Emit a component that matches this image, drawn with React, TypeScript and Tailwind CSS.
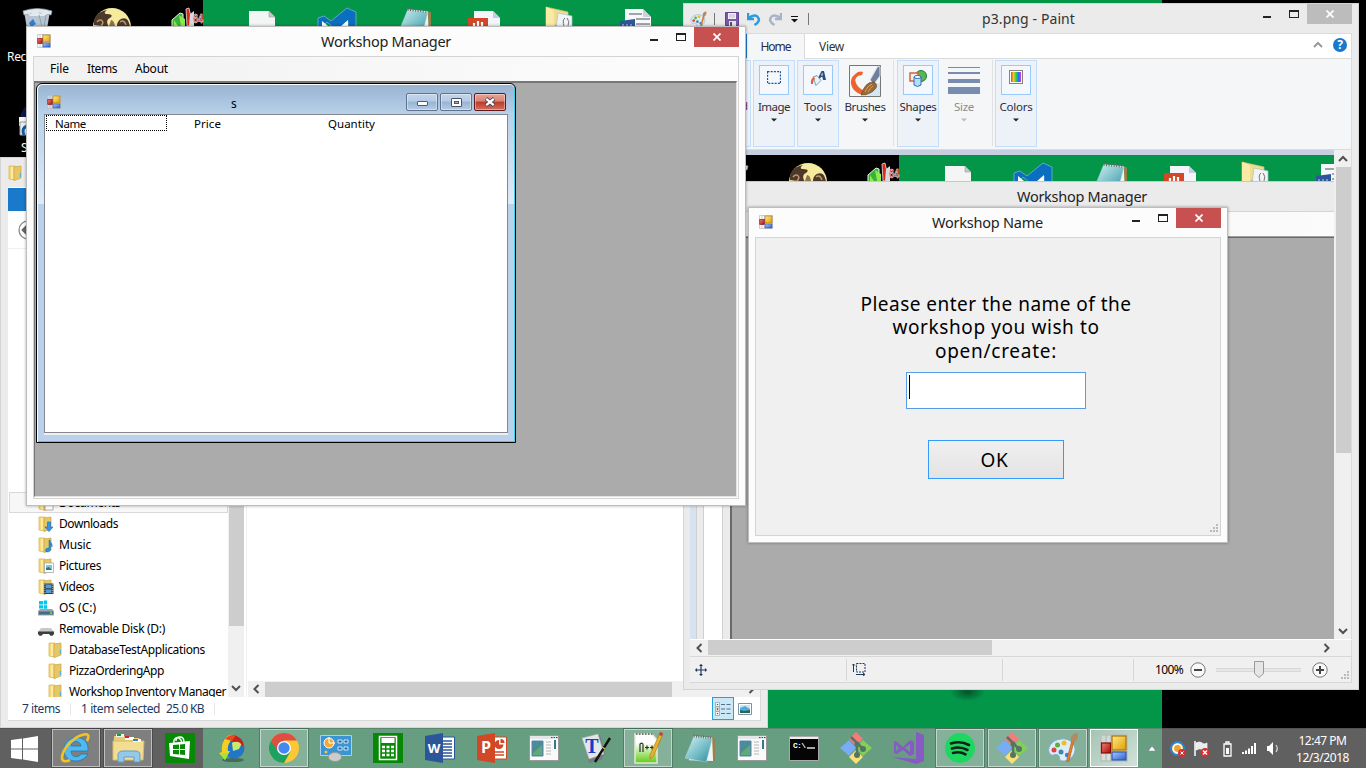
import React, { useLayoutEffect, useRef } from "react";

/** A single line of text, tracked so that it takes exactly `w` pixels. */
function Fit({ w, className = "", children }: { w: number; className?: string; children: string }) {
  const ref = useRef<HTMLSpanElement>(null);
  useLayoutEffect(() => {
    const el = ref.current;
    if (!el) return;
    el.style.letterSpacing = "0px";
    const natural = el.getBoundingClientRect().width;
    el.style.letterSpacing = `${(w - natural) / children.length}px`;
  }, [w, children]);
  return (
    <span ref={ref} className={`inline-block whitespace-nowrap ${className}`}>
      {children}
    </span>
  );
}

function FormsIcon({ size = 14 }: { size?: number }) {
  return (
    <svg width={size} height={size} viewBox="0 0 28 28" className="shrink-0">
      <defs>
        <linearGradient id="fy" x1="0" y1="0" x2="1" y2="1"><stop offset="0" stopColor="#ffe98a" /><stop offset="1" stopColor="#e0a000" /></linearGradient>
        <linearGradient id="fr" x1="0" y1="0" x2="1" y2="1"><stop offset="0" stopColor="#f08070" /><stop offset="1" stopColor="#b00808" /></linearGradient>
        <linearGradient id="fb" x1="0" y1="0" x2="1" y2="1"><stop offset="0" stopColor="#a8c8ff" /><stop offset="1" stopColor="#2860d0" /></linearGradient>
      </defs>
      <path d="M1 1h26v26H1zM1 9h10M1 18h26M6 1v8M6 19v8M11 1v26" fill="#ffffff55" stroke="#bdbdbd" strokeWidth="1.5" />
      <rect x="12" y="2" width="14" height="14" fill="url(#fy)" stroke="#a87400" strokeWidth="1.2" />
      <rect x="1.5" y="9" width="9" height="10" fill="url(#fr)" stroke="#8a0a0a" strokeWidth="1.2" />
      <rect x="12" y="18" width="14" height="8" fill="url(#fb)" stroke="#3358a8" strokeWidth="1.2" />
    </svg>
  );
}

function Folder({ kind = "" }: { kind?: string }) {
  return (
    <svg width="16" height="16" viewBox="0 0 16 16" className="shrink-0">
      <path d="M1 1h6v14l-6-1z" fill="#f5d878" stroke="#d9b95a" strokeWidth=".8" />
      <path d="M6 2l7-1v12l-7 2.6z" fill="#e6c766" stroke="#cfa94d" strokeWidth=".8" />
      <path d="M4 2v12" stroke="#fff3bd" strokeWidth="1.3" />
      {kind === "" && <path d="M12.4 8v4" stroke="#4fb3e0" strokeWidth="1.2" />}
      {kind === "down" && <path d="M9.5 6h3v5H15l-4 4.6L7 11h2.500z" fill="#2f96e8" stroke="#1668b0" strokeWidth=".6" />}
      {kind === "music" && <path d="M12 3c0 3 3 3 2 7-.3-2-1-2-1.500-2v5c0 2-5 3-5 .5S10 11 11 11V3z" fill="#2990dc" stroke="#1a6dae" strokeWidth=".5" />}
      {kind === "pic" && <><path d="M6.500 5h9v9.500h-9z" fill="#fff" stroke="#a8a8a8" strokeWidth=".8" /><path d="M8 7h6v5H8z" fill="#7cc2e6" /><path d="M8 12v-2l3-1 3 3z" fill="#2e7d6b" /></>}
      {kind === "video" && <><path d="M6 4.500h9.500V15H6z" fill="#39434c" /><path d="M8 5.500h5.500v3.700H8zM8 10.500h5.500V14H8z" fill="#4c9ed8" /><path d="M6.900 5v10M14.700 5v10" stroke="#ccc" strokeWidth=".8" strokeDasharray="1 1" /></>}
      {kind === "doc" && <path d="M7 5h8v10H7z" fill="#fff" stroke="#999" strokeWidth=".8" />}
    </svg>
  );
}

function DriveIcon({ os }: { os?: boolean }) {
  return (
    <svg width="16" height="16" viewBox="0 0 16 16" className="shrink-0">
      {os ? (
        <>
          <path d="M1 1h4v3.500H1zM5.700.5H9v4H5.700zM1 5.200h4V8.500H1zM5.700 5.200H9v3.600H5.700z" fill="#00c8f0" />
          <path d="M2 9h12l2 2v4.500H0V11z" fill="#9aa6ae" /><path d="M1 11.500h14v3H1z" fill="#3e6f88" /><circle cx="13" cy="13" r="1" fill="#6bf03c" />
        </>
      ) : (
        <><path d="M3 7h10l3 4H0z" fill="#c9c9c9" /><path d="M0 10.500h16v2.500l-1.500 1.800h-2L11 13H5l-1.500 1.800h-2L0 13z" fill="#3d3d40" /></>
      )}
    </svg>
  );
}

function Notepad({ w, h }: { w: number; h: number }) {
  return (
    <svg width={w} height={h} viewBox="0 0 32 32">
      <defs><linearGradient id="np" x1="0" y1="0" x2="1" y2="1"><stop offset="0" stopColor="#d5f1f4" /><stop offset=".6" stopColor="#6db9c3" /><stop offset="1" stopColor="#2e8a98" /></linearGradient></defs>
      <path d="M28 5l3 1v22l-5 3z" fill="#9c8049" />
      <path d="M9 3l19 2 1 24-25-1z" fill="#eef6f6" />
      <path d="M9 4l19 2-6 24L0 26z" fill="url(#np)" stroke="#b5d8dc" strokeWidth=".5" />
      <path d="M9 3l19 2" stroke="#6a6a6a" strokeWidth="3" strokeDasharray="1 1.400" />
    </svg>
  );
}

/** Upper slice of the desktop with its first row of icons. */
function DesktopStrip() {
  return (
    <div className="h-[26px] w-[1162px] shrink-0 overflow-hidden bg-linear-[90deg,#000_203px,#039649_203px]">
      <svg width="683" height="26" viewBox="0 0 683 26" className="block">
        <path d="M24 11l4 24h18l4-24z" fill="#b6c4d2" /><path d="M23 11q14-5 29 0l-1 4q-14-4-27 0z" fill="#dfe6ec" stroke="#939fa9" strokeWidth=".7" />
        <path d="M26 11l5 3 4-5 5 5 6-4 3 3-5 3H30z" fill="#e4e9ee" /><path d="M29 23l4-4 3 5-5 3z" fill="#2f7fd0" /><path d="M39 15l3 12M46 15l-2 12" stroke="#8fa0b0" />
        <circle cx="112" cy="27" r="19" fill="#f6ea9f" />
        <path d="M94 25c-1-8 4-13 13-15-3 2-3 4 0 4 5 0 6 2 3 4-3 1-4 4-1 9zM117 26c0-8 10-11 12-3l1 3z" fill="#4e382b" /><path d="M97 22c4-5 8 0 4 4M120 22q4-3 6 3" stroke="#b89b68" strokeWidth="1.500" fill="none" /><path d="M111 20q3 0 4 6h-6z" fill="#8d744c" />
        <path d="M172 20l8-7 3 1v13h-11z" fill="#35b436" stroke="#f2f2f2" /><path d="M174 26v-6l4 6zM179 15l6 4v7h-4z" fill="#8ee84e" /><path d="M186 9l3-1 4 18h-6z" fill="#d8291c" stroke="#e4e4e4" strokeWidth=".8" /><path d="M190 14l4-3v15h-5z" fill="#d9d9d9" />
        <text x="193" y="23" fontSize="12" fontWeight="900" fill="#d02323" stroke="#fff" strokeWidth=".5" fontFamily="Liberation Sans, sans-serif" textLength="10" lengthAdjust="spacingAndGlyphs">64</text>
        <path d="M249 11h20l6 6v10h-26z" fill="#f4f5f5" /><path d="M269 11v6h6z" fill="#c4c8c9" stroke="#8b9892" strokeWidth=".5" />
        <path d="M318 18l6-2 7 5 16-13 9 4v16h-8v-7l-7 6h-8l-6-5-5 5h-4z" fill="#0a6fbf" stroke="#77aedd" strokeWidth=".8" /><path d="M322 21l6 5h-6zM340 27l8-7v7z" fill="#fff" />
        <g transform="translate(398,6)"><Notepad w={34} h={34} /></g>
        <path d="M474 11h19l7 7v9h-26z" fill="#f3f5fa" /><path d="M493 11v7h7z" fill="#c2cde2" /><path d="M468 18h20v9h-20z" fill="#d24726" /><path d="M474 26v-3M478 26v-5M482 26v-4" stroke="#fff" strokeWidth="2.200" />
        <path d="M546 7l22 5v4l-16 12h-6z" fill="#efdc91" stroke="#d4c36c" strokeWidth=".7" /><path d="M546 7l8 3v17h-8z" fill="#faeaa5" /><path d="M558 13l14 3v12h-16z" fill="#f1f4f5" stroke="#b3bbc0" strokeWidth=".7" /><path d="M564 26q-2-6 1-8M568 26q2-5-1-8" stroke="#6b757a" fill="none" />
        <path d="M625 9h18l8 8v10h-26z" fill="#f7f8fa" /><path d="M643 9v8h8z" fill="#c9d2dd" /><path d="M629 14h13M636 19h14M636 24h14" stroke="#858b91" strokeWidth="1.500" /><path d="M620 21l15-2v8h-15z" fill="#2b579a" /><path d="M622 25h11" stroke="#c7d3e6" strokeDasharray="2 2" />
      </svg>
    </div>
  );
}

function Caption({ inactive }: { inactive?: boolean }) {
  return (
    <div className="flex h-[20px] items-start">
      <div className="mt-[12px] h-[2px] w-[8px] bg-[#222]" />
      <div className="mt-[6px] ml-[18px] h-[8px] w-[10px] border border-t-2 border-[#222]" />
      <div className={`ml-[8px] flex h-[20px] w-[45px] items-center justify-center ${inactive ? "bg-[#bcbcbc]" : "bg-[#c75050]"}`}>
        <svg width="8" height="8" viewBox="0 0 8 8"><path d="M.5.5l7 7M7.500.5l-7 7" stroke="#fff" strokeWidth="1.700" /></svg>
      </div>
    </div>
  );
}

function Chev({ dir, color = "#505050" }: { dir: "l" | "r" | "u" | "d"; color?: string }) {
  const d = { l: "M6.500 1l-4 4 4 4", r: "M3.500 1l4 4-4 4", u: "M1 7l4-4 4 4", d: "M1 3l4 4 4-4" }[dir];
  return <svg width="10" height="10" viewBox="0 0 10 10" className="shrink-0"><path d={d} fill="none" stroke={color} strokeWidth="2" /></svg>;
}

function Grip() {
  return (
    <svg width="9" height="9" viewBox="0 0 9 9"><path d="M6 0h2v2H6zM6 3h2v2H6zM3 3h2v2H3zM6 6h2v2H6zM3 6h2v2H3zM0 6h2v2H0z" fill="#bababa" /></svg>
  );
}

const tree: { label: string; w: number; icon: React.ReactNode; deep?: boolean; sel?: boolean }[] = [
  { label: "Documents", w: 61, icon: <Folder kind="doc" />, sel: true },
  { label: "Downloads", w: 59, icon: <Folder kind="down" /> },
  { label: "Music", w: 32, icon: <Folder kind="music" /> },
  { label: "Pictures", w: 42, icon: <Folder kind="pic" /> },
  { label: "Videos", w: 35, icon: <Folder kind="video" /> },
  { label: "OS (C:)", w: 37, icon: <DriveIcon os /> },
  { label: "Removable Disk (D:)", w: 106, icon: <DriveIcon /> },
  { label: "DatabaseTestApplications", w: 136, icon: <Folder />, deep: true },
  { label: "PizzaOrderingApp", w: 95, icon: <Folder />, deep: true },
  { label: "Workshop Inventory Manager", w: 157, icon: <Folder />, deep: true },
];

function ExplorerWindow() {
  return (
    <div className="absolute top-[157px] left-0 flex h-[571px] w-[768px] flex-col border border-[#d4d4d4] bg-[#ebebeb] pr-[6px] pb-[6px] pl-[7px]">
      <div className="flex h-[29px] items-center"><Folder /></div>
      <div className="flex min-h-0 flex-1 flex-col border-r border-b border-[#d9d9d9] bg-white">
        <div className="mt-px h-[23px] w-[60px] bg-[#1979ca]" />
        <div className="flex h-[38px] items-center border-b border-[#f0f0f0] pl-[10px]">
          <svg width="20" height="20" viewBox="0 0 20 20"><circle cx="10" cy="10" r="9" fill="#fff" stroke="#888" strokeWidth="1.300" /><path d="M10 5l-5 5 5 5M6 10h9" stroke="#666" strokeWidth="2.500" fill="none" /></svg>
        </div>
        <div className="flex min-h-0 flex-1">
          <div className="flex h-full w-[220px] flex-col overflow-hidden pt-[243px] pl-px">
            {tree.map((t) => (
              <div key={t.label} className={`flex h-[21px] shrink-0 items-center gap-[5px] ${t.deep ? "pl-[38px]" : "pl-[28px]"} ${t.sel ? "border border-[#d9d9d9] bg-[#f7f7f7]" : "border border-transparent"}`}>
                {t.icon}
                <Fit w={t.w} className="text-[12px] text-black">{t.label}</Fit>
              </div>
            ))}
          </div>
          <div className="flex w-[16px] flex-col items-center bg-[#f0f0f0]">
            <div className="h-[377px] w-[15px] bg-[#cdcdcd]" />
            <div className="mt-auto pb-[4px]"><Chev dir="d" /></div>
          </div>
          <div className="ml-[2px] flex flex-1 flex-col justify-end border-l border-[#f0f0f0] pl-px">
            <div className="flex h-[16px] items-center bg-[#f0f0f0]">
              <div className="flex w-[17px] justify-center"><Chev dir="l" /></div>
              <div className="h-[15px] w-[407px] bg-[#cdcdcd]" />
              <div className="ml-auto pr-[4px]"><Chev dir="r" /></div>
            </div>
          </div>
        </div>
        <div className="flex h-[23px] items-center pl-[14px] text-[12px] text-[#1e395b]">
          <Fit w={38}>7 items</Fit>
          <div className="mx-[10px] h-[12px] w-px bg-[#e8e8e8]" />
          <Fit w={79}>1 item selected</Fit>
          <Fit w={38} className="ml-[6px]">25.0 KB</Fit>
          <div className="ml-[10px] h-[12px] w-px bg-[#e8e8e8]" />
          <div className="ml-auto flex h-[23px] w-[22px] items-center justify-center border border-[#26a0da] bg-[#cbe8f6]">
            <svg width="16" height="14" viewBox="0 0 16 14"><path d="M.5.500h4v4h-4zM.5 5h4v4h-4zM.5 9.500h4v4h-4z" fill="#fff" stroke="#8b98a8" strokeWidth=".7" /><path d="M6 2.500h4M11.500 2.500h4M6 7h4M11.500 7h4M6 11.500h4M11.500 11.500h4" stroke="#596d86" /><circle cx="2.500" cy="2.500" r=".8" fill="#258040" /><circle cx="2.500" cy="7" r=".9" fill="#d11" /><circle cx="2.500" cy="11.500" r=".8" fill="#26c" /></svg>
          </div>
          <svg width="14" height="12" viewBox="0 0 14 12" className="mr-[8px] ml-[4px]"><path d="M.5.500h13v11H.5z" fill="#fff" stroke="#7f8fa5" /><path d="M2 2h10v8H2z" fill="#54a8dc" /><path d="M2 5l5-2 5 3v-4H2z" fill="#c6e8f7" /><path d="M2 7l4 1 6-1v3H2z" fill="#246a4c" /></svg>
        </div>
      </div>
    </div>
  );
}

function Tri({ color = "#222" }: { color?: string }) {
  return <svg width="6" height="4" viewBox="0 0 6 4"><path d="M0 .500h6L3 3.500z" fill={color} /></svg>;
}

function RibbonGroup({ label, w, children, plain, dim }: { label: string; w: number; children: React.ReactNode; plain?: boolean; dim?: boolean }) {
  return (
    <div className={`flex h-[87px] shrink-0 flex-col items-center border pt-[4px] ${plain ? "w-[48px] border-transparent" : "w-[42px] border-[#c3defa] bg-[#ecf2f7]"}`}>
      {plain ? <div className="flex h-[32px] items-center">{children}</div> : <div className="mb-[2px] flex h-[30px] w-[30px] justify-center border border-[#98c9fa] bg-[#f4f8fc] pt-[4px]">{children}</div>}
      <Fit w={w} className={`mt-[1px] text-[11.500px] leading-[18px] ${dim ? "text-[#8d8d8d]" : "text-[#2c2c3c]"}`}>{label}</Fit>
      <div className="mt-[2px] flex h-[4px]"><Tri color={dim ? "#bbb" : "#222"} /></div>
    </div>
  );
}

function Palette({ size }: { size: number }) {
  return (
    <svg width={size} height={size} viewBox="0 0 32 32" className="shrink-0">
      <path d="M14 7C4 8-1 17 3 22c3 3 5-1 8 1s0 5 4 6c7 1 14-6 13-13-1-6-7-10-14-9z" fill="#dcedf8" stroke="#7eaecb" />
      <circle cx="7" cy="18" r="2.500" fill="#e2433a" /><circle cx="10.500" cy="13" r="2.500" fill="#58b13c" /><circle cx="17" cy="11" r="2.500" fill="#f4ba28" /><circle cx="14" cy="20" r="2.500" fill="#3989ac" /><circle cx="20" cy="23" r="2.200" fill="#3b82e0" />
      <path d="M27 9l-5 20q-3 2-2-2l5-19z" fill="#e8812c" stroke="#a85818" strokeWidth=".6" /><path d="M24 9c-1-5 2-8 7-8 0 4 0 7-4 9z" fill="#b58a63" />
    </svg>
  );
}

function PaintWindow() {
  return (
    <div className="absolute top-[3px] left-[683px] flex h-[687px] w-[676px] flex-col border border-[#d4d4d4] bg-[#ebebeb] pr-[6px] pb-[6px] pl-[6px]">
      <div className="flex h-[29px] shrink-0 items-start">
        <div className="mt-[5px] flex h-[20px] w-[130px] items-center">
          <Palette size={17} />
          <div className="ml-[7px] h-[12px] w-px shrink-0 bg-[#777]" />
          <svg width="14" height="14" viewBox="0 0 14 14" className="ml-[10px] shrink-0"><path d="M.5.500h13v13h-13z" fill="#7957ad" stroke="#60448c" /><path d="M3 1h8v6H3z" fill="#f1eef5" /><path d="M4 3h6M4 5h6" stroke="#aaa" strokeWidth=".7" /><path d="M4 9h7v5H4z" fill="#e4e4e4" /><path d="M5 10h2v4H5z" fill="#555" /></svg>
          <svg width="14" height="14" viewBox="0 0 14 14" className="ml-[8px] shrink-0"><path d="M1 1v6h6M1.800 6q5-4 8.500-1.500Q14.500 9 7.500 13" fill="none" stroke="#2e9be0" strokeWidth="2.500" /></svg>
          <svg width="14" height="14" viewBox="0 0 14 14" className="ml-[7px] shrink-0 -scale-x-100"><path d="M1 1v6h6M1.800 6q5-4 8.500-1.500Q14.500 9 7.500 13" fill="none" stroke="#a7b4c8" strokeWidth="2.500" /></svg>
          <svg width="7" height="7" viewBox="0 0 7 7" className="ml-[9px] shrink-0"><path d="M0 .500h7" stroke="#111" /><path d="M0 3h7L3.500 6.500z" fill="#111" /></svg>
          <div className="ml-[10px] h-[12px] w-px shrink-0 bg-[#777]" />
        </div>
        <Fit w={93} className="mt-[5px] ml-[162px] text-[14px] leading-[20px] text-[#333]">p3.png - Paint</Fit>
        <div className="ml-auto"><Caption inactive /></div>
      </div>
      <div className="flex h-[26px] shrink-0 items-start border-t border-r border-b border-[#dadbdc] bg-white">
        <div className="h-[24px] w-[57px] bg-[#1979ca]" />
        <div className="flex h-[25px] w-[58px] items-center justify-center border-r border-[#dadbdc] bg-[#f5f6f7]"><Fit w={30} className="text-[12px] text-[#2c2c3c]">Home</Fit></div>
        <div className="flex h-[25px] items-center pl-[14px]"><Fit w={25} className="text-[12px] text-[#333]">View</Fit></div>
        <div className="ml-auto flex h-[22px] items-center gap-[10px] pr-[4px]">
          <Chev dir="u" color="#999" />
          <div className="flex h-[14px] w-[14px] items-center justify-center rounded-full bg-[#1979ca] text-[12px] leading-none font-bold text-white">?</div>
        </div>
      </div>
      <div className="flex h-[91px] shrink-0 border-r border-b border-[#dadbdc] bg-[#f5f6f7] pt-[1px]">
        <div className="flex h-[87px] w-[61px] items-center justify-end border border-[#c3defa] bg-[#ecf2f7] text-[11px]"><span className="mt-[6px] pr-[2px] text-[#603070]">d</span></div>
        <div className="ml-[2px] flex gap-[2px]">
          <RibbonGroup label="Image" w={32}><svg width="14" height="13" viewBox="0 0 14 13" className="mt-[1px]"><path d="M.5.500h13v12H.5z" fill="none" stroke="#175a9c" strokeWidth="1.300" strokeDasharray="2 1.200" /></svg></RibbonGroup>
          <RibbonGroup label="Tools" w={28}><svg width="18" height="17" viewBox="0 0 18 17"><path d="M8 10L12.500 1h2.500l2 9h-3l-.6-3h-1.500L10 11z" fill="#28507c" /><path d="M12 5.500l1.300-3 .5 3z" fill="#eef" /><path d="M4 7l4-1.500 4 5-5 5z" fill="#e9f1f7" stroke="#7e9db5" /><path d="M2 14q-1-5 3-7l1 2q-2 1-2 5z" fill="#e2623d" /></svg></RibbonGroup>
        </div>
        <div className="ml-[2px]"><RibbonGroup label="Brushes" w={41} plain>
          <svg width="32" height="32" viewBox="0 0 32 32"><path d="M.5.500h31v31H.5z" fill="#f4f6f8" stroke="#777" /><path d="M31 17v14H14z" fill="#d3e7f2" /><path d="M14 7q-2-1-5 0-10 6-6 15 3 7 14 8l2-3q-8-2-11-7-4-6 1-9l4-1z" fill="#f0622c" /><path d="M21 15L29 1l2 1v9l-6 8z" fill="#6d819b" stroke="#d4dde8" /><path d="M12 30q4-13 12-13 5 1 3 6-5 7-15 7z" fill="#9a6a37" stroke="#5c3a18" strokeWidth=".6" /><path d="M16 27q2-6 7-8M19 27q2-4 5-6" stroke="#d6a263" fill="none" /></svg>
        </RibbonGroup></div>
        <div className="ml-[4px] h-[86px] w-px bg-[#e0e1e2]" />
        <div className="ml-[3px]"><RibbonGroup label="Shapes" w={37}><svg width="18" height="17" viewBox="0 0 18 17"><circle cx="12" cy="6" r="5.500" fill="#57b657" stroke="#217e2c" /><path d="M1 3h8v8H1z" fill="#fff0e8" stroke="#ce6540" strokeWidth="1.500" /><path d="M5 7h7v8q-3.500 3-7 0z" fill="#b4dcfb" stroke="#2c6eb1" /><ellipse cx="8.500" cy="7" rx="3.500" ry="1.500" fill="#fff" stroke="#2c6eb1" /></svg></RibbonGroup></div>
        <div className="ml-px"><RibbonGroup label="Size" w={20} plain dim><svg width="32" height="29" viewBox="0 0 32 29"><path d="M0 0h32v1H0zM0 5h32v2H0zM0 12h32v4H0zM0 20h32v7H0z" fill="#788cb0" /></svg></RibbonGroup></div>
        <div className="ml-[4px] h-[86px] w-px bg-[#e0e1e2]" />
        <div className="ml-[2px]"><RibbonGroup label="Colors" w={33}><div className="h-[14px] w-[14px] border border-[#8a8080] bg-white p-[1px]"><div className="h-full w-full bg-linear-[90deg,#f33,#e8d020,#2cd840,#2c70f0,#d13be0]" /></div></RibbonGroup></div>
      </div>
      <div className="flex min-h-0 flex-1">
        <div className="flex min-w-0 flex-1 flex-col overflow-hidden border-t-[5px] border-[#c5cfe0] pl-[6px]">
          <DesktopStrip />
          <div className="flex h-[30px] shrink-0 items-center border-t border-[#c8c8c8] bg-[#ebebeb] pl-[321px]"><Fit w={130} className="text-[14.500px] text-[#222]">Workshop Manager</Fit></div>
          <div className="h-[26px] shrink-0 border-t border-[#d4d4d4] border-b border-b-[#a0a0a0] bg-linear-to-r from-[#f0f0f0] to-[#fbfbfb]" />
          <div className="-ml-[6px] flex flex-1">
            <div className="w-[7px] border-r border-[#cfcfcf] bg-[#d8e1f0]" />
            <div className="w-[7px] border-r border-[#d0d0d0] bg-[#ebebeb]" />
            <div className="w-[19px] border-r border-[#d0d0d0] bg-white" />
            <div className="w-[7px] bg-[#ebebeb]" />
            <div className="flex-1 border-t border-l-2 border-[#696969] bg-[#ababab]" />
          </div>
        </div>
        <div className="flex w-[18px] flex-col items-center border-r border-[#dadbdc] bg-[#f0f0f0] pl-px">
          <div className="flex h-[17px] items-center"><Chev dir="u" /></div>
          <div className="h-[286px] w-[15px] bg-[#cdcdcd]" />
          <div className="mt-auto pb-[3px]"><Chev dir="d" /></div>
        </div>
      </div>
      <div className="flex h-[17px] shrink-0 items-start border-t border-r border-[#fff] border-r-[#dadbdc] bg-[#f0f0f0]">
        <div className="flex h-[15px] w-[18px] items-center justify-center pl-px"><Chev dir="l" /></div>
        <div className="h-[15px] w-[284px] bg-[#cdcdcd]" />
        <div className="mt-[3px] mr-[20px] ml-auto"><Chev dir="r" /></div>
      </div>
      <div className="flex h-[27px] shrink-0 items-center border border-l-0 border-[#d7d7d7] bg-[#f0f0f0]">
        <div className="flex h-[22px] w-[157px] items-center border-r border-[#d7d7d7] pl-[5px]"><svg width="12" height="12" viewBox="0 0 12 12"><path d="M6 0v12M0 6h12M4.500 1.500h3M4.500 10.500h3M1.500 4.500v3M10.500 4.500v3" stroke="#1e395b" strokeWidth="1.200" /></svg></div>
        <div className="flex h-[22px] w-[156px] items-center border-r border-[#d7d7d7] pl-[5px]"><svg width="14" height="13" viewBox="0 0 14 13"><path d="M4.500.500h8.500v8.500H4.500z" fill="none" stroke="#1e395b" strokeDasharray="2 1" /><path d="M1.500 9V1M0 2.500L1.500 1 3 2.500M4 11.500h9M11 10l2 1.500L11 13" stroke="#1e395b" fill="none" /></svg></div>
        <div className="h-[22px] w-[131px] border-r border-[#d7d7d7]" />
        <Fit w={28} className="ml-[21px] text-[12px] text-black">100%</Fit>
        <svg width="16" height="16" viewBox="0 0 16 16" className="ml-[7px]"><circle cx="8" cy="8" r="7.200" fill="#f8f8f8" stroke="#777" /><path d="M4 8h8" stroke="#444" strokeWidth="2" /></svg>
        <div className="ml-[10px] flex h-[17px] w-[85px] items-start justify-center bg-[linear-gradient(#d0d0d0,#eee,#d0d0d0)] bg-[length:100%_4px] bg-[position:0_7px] bg-no-repeat"><svg width="10" height="17" viewBox="0 0 10 17"><path d="M.5.500h9v12L5 16.500.5 12.500z" fill="#e6e6e6" stroke="#999" /></svg></div>
        <svg width="16" height="16" viewBox="0 0 16 16" className="ml-[11px]"><circle cx="8" cy="8" r="7.200" fill="#f8f8f8" stroke="#777" /><path d="M4 8h8M8 4v8" stroke="#444" strokeWidth="2" /></svg>
        <div className="mt-[12px] mr-[1px] ml-auto"><Grip /></div>
      </div>
    </div>
  );
}

function MdiButton({ kind }: { kind: "min" | "max" | "close" }) {
  return (
    <div className={`flex h-[18px] w-[32px] items-center justify-center rounded-[2px] border ${kind === "close" ? "border-[#5a1a20] bg-linear-[#e8a498_0%,#d98374_45%,#b93a2a_50%,#d4715c_100%]" : "border-[#5f7390] bg-linear-[#c4d6ec_0%,#b5cae4_45%,#98b3d2_50%,#b4cde8_100%]"} shadow-[inset_0_0_0_1px_#ffffff66]`}>
      {kind === "min" && <div className="mt-[3px] h-[5px] w-[11px] rounded-[1px] border border-[#555a65] bg-white" />}
      {kind === "max" && <div className="flex h-[9px] w-[11px] items-center justify-center rounded-[1px] border border-[#4c5260] bg-white"><div className="h-[3px] w-[5px] border border-[#4c5260] bg-[#a5bcd8]" /></div>}
      {kind === "close" && <svg width="12" height="10" viewBox="0 0 12 10"><path d="M2 1.500l8 7M10 1.500l-8 7" stroke="#4e4658" strokeWidth="4" /><path d="M2.300 1.800l7.400 6.400M9.700 1.800L2.300 8.200" stroke="#fff" strokeWidth="2.200" /></svg>}
    </div>
  );
}

function ManagerWindow() {
  return (
    <div className="absolute top-[26px] left-[26px] flex h-[480px] w-[720px] flex-col border border-[#bdbdbd] bg-[#fcfcfc] px-[6px] pb-[6px] shadow-[0_0_3px_#0005]">
      <div className="flex h-[29px] shrink-0 items-start">
        <div className="mt-[7px] ml-[4px]"><FormsIcon /></div>
        <Fit w={130} className="mt-[4px] ml-[270px] text-[14.500px] leading-[21px] text-[#222]">Workshop Manager</Fit>
        <div className="ml-auto"><Caption /></div>
      </div>
      <div className="flex min-h-0 flex-1 flex-col border border-[#d4d4d4]">
        <div className="flex h-[24px] shrink-0 items-center bg-linear-to-r from-[#f1f1f1] to-[#fdfdfd] pl-[16px] text-[12px] text-black">
          <Fit w={19}>File</Fit>
          <Fit w={30} className="ml-[18px]">Items</Fit>
          <Fit w={33} className="ml-[18px]">About</Fit>
        </div>
        <div className="mr-px mb-px flex min-h-0 flex-1 border border-t-2 border-[#e3e3e3] border-t-[#777] border-l-[#777] bg-[#ababab] pl-px">
          <div className="flex h-[360px] w-[480px] flex-col rounded-t-[6px] border border-black bg-linear-[90deg,#b9d1ea_0px,#b9d1ea_8px] px-[7px] pb-[7px] shadow-[inset_1px_1px_0_#fff,inset_-1px_-1px_0_#3dd0ea]">
            <div className="-mx-[6px] mt-px flex h-[29px] shrink-0 items-start rounded-t-[5px] bg-linear-to-b from-[#99b4d1] to-[#b9d1ea] pr-[8px] pl-[9px]">
              <div className="mt-[10px]"><FormsIcon /></div>
              <Fit w={7} className="mt-[10px] ml-[170px] text-[12px] leading-[18px] text-black">s</Fit>
              <div className="mt-[8px] ml-auto flex gap-[2px]"><MdiButton kind="min" /><MdiButton kind="max" /><MdiButton kind="close" /></div>
            </div>
            <div className="-mx-[6px] flex flex-1 bg-linear-[180deg,#b9d1ea_0px,#e0eaf6_90px,#b9d1ea_90px] px-[6px]">
              <div className="flex flex-1 items-start border border-[#828790] bg-white pl-px text-[11.500px] leading-[15px] text-black">
                <div className="h-[16px] w-[121px] border border-dotted border-black pl-[8px]"><Fit w={31} className="-mt-px">Name</Fit></div>
                <Fit w={27} className="mt-px ml-[27px]">Price</Fit>
                <Fit w={47} className="mt-px ml-[107px]">Quantity</Fit>
              </div>
            </div>
            <div className="h-[2px] bg-[#f0f0f0]" />
          </div>
        </div>
      </div>
    </div>
  );
}

function NameDialog() {
  return (
    <div className="absolute top-[207px] left-[748px] flex h-[336px] w-[480px] flex-col border border-[#bdbdbd] bg-[#fcfcfc] px-[6px] pb-[6px] shadow-[0_0_3px_#0005]">
      <div className="flex h-[29px] shrink-0 items-start">
        <div className="mt-[7px] ml-[4px]"><FormsIcon /></div>
        <Fit w={111} className="mt-[4px] ml-[159px] text-[14.500px] leading-[21px] text-[#222]">Workshop Name</Fit>
        <div className="ml-auto"><Caption /></div>
      </div>
      <div className="flex flex-1 flex-col items-center border border-[#d4d4d4] bg-[#f0f0f0] pr-[1px] pl-[17px]">
        <div className="mt-[55px] flex w-full flex-col items-center text-[19px] leading-[23.400px] text-black">
          <Fit w={271}>Please enter the name of the</Fit>
          <Fit w={207}>workshop you wish to</Fit>
          <Fit w={122}>open/create:</Fit>
        </div>
        <div className="mt-[9px] h-[37px] w-[180px] border border-[#569de5] bg-white pt-[2px] pl-[2px]"><div className="h-[24px] w-px bg-black" /></div>
        <div className="mt-[31px] flex h-[39px] w-[136px] items-center justify-center border border-[#3399ff] bg-linear-to-b from-[#f0f0f0] to-[#e3e3e3] pt-[2px] text-[19px] text-black"><Fit w={28} className="-ml-[3px]">OK</Fit></div>
        <div className="mt-auto mb-[2px] self-end"><Grip /></div>
      </div>
    </div>
  );
}

function GitIcon() {
  return (
    <svg width="32" height="32" viewBox="0 0 32 32"><path d="M16 0l7 7-7 7-7-7z" fill="#f77b78" /><path d="M9 8l7 8-7 8-9-8z" fill="#78acf5" /><path d="M23 8l9 8-9 8-7-8z" fill="#83cf58" /><path d="M16 18l7 7-7 7-7-7z" fill="#fbe076" /><path d="M11 5l6 6v11M17 11l6 6" stroke="#537563" strokeWidth="2.500" fill="none" /><circle cx="17" cy="23" r="3" fill="#537563" /><circle cx="23" cy="17" r="3" fill="#537563" /><circle cx="17" cy="12" r="2.500" fill="#537563" /></svg>
  );
}

function Generic() {
  return <svg width="30" height="26" viewBox="0 0 30 26"><path d="M.5.500h29v25H.5z" fill="#fafafa" stroke="#999" /><path d="M1 1h28v3H1z" fill="#e4e6ea" /><path d="M22 2.500h1.500M24.500 2.500H26M27 2.500h1.500" stroke="#445" /><path d="M3 6h11v15H3z" fill="#4b8c96" stroke="#5b86ad" /><path d="M4 18l9-8v10H4z" fill="#61a975" /><path d="M17 7h5M17 10h5M17 13h5M17 16h5M17 19h5" stroke="#b6b6b6" /><path d="M25 5h2v9h-2z" fill="#347a8d" /></svg>;
}

function Office({ color, letter }: { color: string; letter: string }) {
  return (
    <svg width="30" height="30" viewBox="0 0 30 30"><path d="M15 4h14.500v22H15z" fill="#fff" stroke={color} />
      {letter === "W" ? <path d="M18 8h9M18 11h9M18 14h9M18 17h9M18 20h9M18 23h9" stroke={color} strokeWidth="1.400" /> : <><path d="M22 7a4.500 4.500 0 1 0 4.500 4.500H22z" fill={color} /><path d="M23.500 6v4h4a4 4 0 0 0-4-4z" fill={color} /><path d="M18 19h9M18 22h9" stroke={color} strokeWidth="1.400" /></>}
      <path d="M0 3l18-3v30L0 27z" fill={color} />
      <text x="9" y="20" textAnchor="middle" fontSize={letter === "W" ? 13 : 16} fontWeight="bold" fill="#fff" fontFamily="Open Sans, sans-serif">{letter}</text></svg>
  );
}

const tasks: { icon: React.ReactNode; open?: boolean; active?: boolean; tight?: boolean }[] = [
  { open: true, icon: <svg width="32" height="32" viewBox="0 0 32 32"><path d="M28 19H11c0 7 8 7 10 3h7C22 33 3 31 4 17 5 3 27 1 28 16zM11 14h10c-1-6-9-6-10 0z" fill="#52b9ec" stroke="#1e78ba" strokeWidth=".8" /><path d="M27 9c3-6 1-8-5-6C12 6 2 18 2 26c0 4 4 4 8 2" stroke="#f3c223" strokeWidth="2.600" fill="none" /></svg> },
  { open: true, icon: <svg width="34" height="32" viewBox="0 0 34 32"><path d="M3 4h10l2 2h13v22H2z" fill="#e6cc7a" /><path d="M5 2h8v3H5z" fill="#f9f4df" /><path d="M6 3h4" stroke="#159b39" strokeWidth="2" /><path d="M14 5h9v3h-9z" fill="#fff" /><path d="M14 5h4" stroke="#d22" strokeWidth="2" /><path d="M2 9h31l-1 19H2z" fill="#f3dd93" stroke="#d8bc67" /><path d="M22 7h8v3h-8z" fill="#fff" /><path d="M22 8h5" stroke="#2489d3" strokeWidth="2" /><path d="M7 30v-7q0-4 5-4h12q5 0 5 4v7h-6v-5H13v5z" fill="#94c9ea" stroke="#5f9fca" /></svg> },
  { icon: <svg width="30" height="30" viewBox="0 0 30 30"><path d="M0 0h30v30H0z" fill="#078907" /><path d="M9 10V7q3-5 7 0l1 3M11 8q0-4 4-4t4 5" stroke="#fff" strokeWidth="1.400" fill="none" /><path d="M4 10l21-2-1 18-19-3z" fill="#fff" /><path d="M8 12l6-.5v4.500H8zM15 11.500l5-.5v5h-5zM8 17h6v4.500L8 21zM15 17h5v5l-5-.5z" fill="#078907" /></svg> },
  { icon: <svg width="30" height="30" viewBox="0 0 30 30"><ellipse cx="16" cy="27" rx="11" ry="2" fill="#2b4d3b" opacity=".6" /><circle cx="17" cy="15" r="10.500" fill="#2276c8" /><path d="M15 10l5-4 5 4-3 6-6 2z" fill="#cce96f" /><path d="M6 8Q14-3 24 6q3 3 2 8-3-6-8-5z" fill="#c81f1f" /><path d="M7 7Q11 1 17 2l-4 7q-3 4-2 9l2 0-5 9-6-7 3-1q-1-6 2-12z" fill="#f4cf23" /><path d="M8 6q5-5 11-4l-4 6z" fill="#e84a1f" /><path d="M3 21l5 6 4-8-3 1z" fill="#9ee639" /></svg> },
  { open: true, icon: <svg width="30" height="30" viewBox="0 0 30 30"><circle cx="15" cy="15" r="15" fill="#fcc934" /><path d="M2 7.500A15 15 0 0 0 15 30l6.500-11.500L15 15 9 17z" fill="#1da261" /><path d="M2 7.500L9 19l6-4V7.500h13A15 15 0 0 0 2 7.500z" fill="#df4e40" /><circle cx="15" cy="15" r="7" fill="#fff" /><circle cx="15" cy="15" r="5.700" fill="#4688f1" /></svg> },
  { icon: <svg width="32" height="28" viewBox="0 0 32 28"><path d="M.5 1.500h31v20H.500z" fill="#3a96d2" stroke="#a5d3ee" /><circle cx="9" cy="9" r="5" fill="#f6a734" stroke="#fff" /><path d="M9 3v6h6" stroke="#fff" fill="none" /><path d="M18 6h4v3h-4zM24 6h4v3h-4zM18 13h4v3h-4zM24 13h4v3h-4z" fill="#2367ac" stroke="#fff" strokeWidth=".8" /><circle cx="6" cy="18" r="1.500" fill="#fb4" /><ellipse cx="15" cy="23" rx="6.500" ry="4.500" fill="#ccc" stroke="#999" /></svg> },
  { icon: <svg width="30" height="30" viewBox="0 0 30 30"><path d="M0 0h30v30H0z" fill="#078907" /><path d="M6.500 3.500h17v23h-17z" fill="none" stroke="#fff" strokeWidth="1.500" /><path d="M8.500 5h13v5h-13z" fill="#fff" /><path d="M9 14h3M13.500 14h3M18 14h3M9 18h3M13.500 18h3M18 18h3M9 22h3M13.500 22h3M18 22h3" stroke="#fff" strokeWidth="2.600" /></svg> },
  { icon: <Office color="#2b579a" letter="W" /> },
  { icon: <Office color="#d24726" letter="P" /> },
  { icon: <Generic /> },
  { icon: <svg width="32" height="32" viewBox="0 0 32 32"><path d="M4 7l16-4 5 19-4 6-12 3z" fill="#777c82" /><path d="M2 6l16-4 6 20-15 5z" fill="#e4e7ea" stroke="#aaa" strokeWidth=".6" /><text x="12" y="21" textAnchor="middle" fontSize="20" fontWeight="bold" fill="#1938c8" fontFamily="Liberation Serif, serif">T</text><path d="M30 6L15 30" stroke="#14150f" strokeWidth="2.500" /><path d="M22 15l3 2" stroke="#d1b65d" strokeWidth="1.500" /></svg> },
  { open: true, icon: <svg width="32" height="32" viewBox="0 0 32 32"><defs><linearGradient id="nn" x2="0" y2="1"><stop offset=".3" stopColor="#fff" /><stop offset="1" stopColor="#61cc11" /></linearGradient></defs><path d="M3 2h17l5 6v23H3z" fill="url(#nn)" stroke="#e4e7d8" strokeWidth="1.500" /><path d="M4 2h17" stroke="#777" strokeWidth="2" strokeDasharray="1.500 1.500" /><path d="M8 20v-8q3-2 3 1v7M13 15.500h4M15 13.500v4M18 15.500h4M20 13.500v4" stroke="#28321e" strokeWidth="1.200" fill="none" /><path d="M28 1l3 1-10 23-3 2v-4z" fill="#e9b22c" stroke="#a4701c" strokeWidth=".6" /><path d="M27 3l3 1 1-3-3-1z" fill="#c34040" /></svg> },
  { icon: <Notepad w={31} h={31} /> },
  { icon: <Generic /> },
  { icon: <svg width="30" height="25" viewBox="0 0 30 25"><path d="M.5.500h29v24H.5z" fill="#050505" stroke="#aaa" /><path d="M1 1h28v2H1z" fill="#eee" /><text x="4" y="12" fontSize="8" fontWeight="bold" fill="#fff" fontFamily="Liberation Mono, monospace" textLength="13">C:\</text><path d="M18 12h8" stroke="#fff" strokeWidth="1.300" /></svg> },
  { icon: <GitIcon /> },
  { icon: <svg width="33" height="32" viewBox="0 0 33 32"><path d="M24 0l8 3v26l-8 3-24-7 24 2z" fill="#865cc3" /><path d="M2 9l3 1 6 5 7-7 4 2v12l-4 2-7-6-6 4-3-1zM4 13v6l3-3zM18 12l-5 4 5 4z" fill="#865cc3" fillRule="evenodd" /></svg> },
  { open: true, icon: <svg width="30" height="30" viewBox="0 0 30 30"><circle cx="15" cy="15" r="15" fill="#1ed760" /><path d="M6 10.500q10-3 18 1.500M7 15.500q8-2.500 15.500 1.500M8 20q7-2 12.500 1.300" stroke="#122218" strokeWidth="2.600" strokeLinecap="round" fill="none" /></svg> },
  { open: true, icon: <GitIcon /> },
  { open: true, tight: true, icon: <Palette size={32} /> },
  { open: true, tight: true, active: true, icon: <FormsIcon size={28} /> },
];

function Taskbar() {
  return (
    <div className="absolute top-[728px] left-0 flex h-[40px] w-[1366px] items-center border-t border-[#00000022] bg-linear-[90deg,#606060_0_203px,#679d80_203px_1162px,#606060_1162px]">
      <div className="flex w-[50px] shrink-0 justify-center"><svg width="28" height="26" viewBox="0 0 28 26"><path d="M0 4l11-1.500V12.500H0zM12 2.400L27 0v12.500H12zM0 13.500h11v10L0 22zM12 13.500h15V26l-15-2.400z" fill="#fff" /></svg></div>
      {tasks.map((t, i) => (
        <div key={i} className={`flex h-full w-[52px] shrink-0 items-start justify-center ${t.tight ? "-ml-px" : ""}`}>
          <div className={`flex h-[38px] w-[48px] items-center justify-center ${t.active ? "border border-white bg-linear-to-br from-white/40 to-white/70" : t.open ? "border border-white/50 bg-white/20 outline outline-black/20" : ""}`}>{t.icon}</div>
        </div>
      ))}
      <div className="ml-[8px] flex shrink-0 items-center">
        <svg width="8" height="5" viewBox="0 0 8 5"><path d="M0 5l4-5 4 5z" fill="#fff" stroke="#456" strokeWidth=".4" /></svg>
        <svg width="16" height="16" viewBox="0 0 16 16" className="ml-[14px]"><circle cx="7.500" cy="7.500" r="6.500" fill="#f2a030" stroke="#208ad8" strokeWidth="2" /><circle cx="7.500" cy="7.500" r="4.300" fill="none" stroke="#fff" strokeWidth="1.800" /><circle cx="12" cy="12" r="4" fill="#d43232" /><path d="M10.500 10.500l3 3M13.500 10.500l-3 3" stroke="#fff" /></svg>
        <svg width="17" height="16" viewBox="0 0 17 16" className="ml-[7px]"><path d="M2 0v15" stroke="#fff" strokeWidth="1.500" /><path d="M3 2q4-2 6 0t5 0v7q-3 1-5-.5T3 9z" fill="#ececec" stroke="#fff" strokeWidth=".7" /><circle cx="12" cy="11.500" r="4.500" fill="#d43232" /><path d="M10 9.500l4 4M14 9.500l-4 4" stroke="#fff" strokeWidth="1.400" /></svg>
        <svg width="9" height="16" viewBox="0 0 9 16" className="ml-[13px]"><path d="M3 1h3v2H3zM1 3h7v12H1z" fill="none" stroke="#fff" strokeWidth="1.300" /><path d="M3 7h3v6H3z" fill="#fff" /></svg>
        <svg width="16" height="13" viewBox="0 0 16 13" className="ml-[9px]"><path d="M1 10h2v2H1zM4 8.500h2V12H4zM7 6.500h2V12H7zM10 4h2v8h-2zM13 1h2v11h-2z" fill="#fff" /></svg>
        <svg width="15" height="15" viewBox="0 0 15 15" className="ml-[9px]"><path d="M1 5h2l4-4v13l-4-4H1z" fill="#fff" /><path d="M10 4q2.500 3.500 0 7" stroke="#ddd" fill="none" strokeWidth="1.200" /></svg>
      </div>
      <div className="mr-[17px] ml-auto flex flex-col items-center text-[12px] leading-[17px] text-white">
        <Fit w={48}>12:47 PM</Fit>
        <Fit w={53}>12/3/2018</Fit>
      </div>
    </div>
  );
}

export default function App() {
  return (
    <div className="relative h-[768px] w-[1366px] overflow-hidden bg-linear-[90deg,#000_203px,#039649_203px_1162px,#000_1162px] font-['Noto_Sans','Open_Sans',sans-serif]">
      <DesktopStrip />
      <div className="absolute top-[47px] left-[7px] text-[12px] leading-[20px] text-white"><Fit w={19}>Rec</Fit></div>
      <svg width="50" height="38" viewBox="0 0 50 38" className="absolute top-[102px] left-[15px]"><circle cx="24" cy="18" r="19" fill="#101748" /><path d="M4 15h22v9H4z" fill="#f4f5f7" /><path d="M5 20h18v13H5z" fill="#e7eef4" stroke="#999" /><path d="M9 33q-3-7 3-9" stroke="#145aa4" strokeWidth="3" fill="none" /></svg>
      <div className="absolute top-[138px] left-[21px] text-[12px] leading-[20px] text-white">S</div>
      <div className="absolute top-[680px] left-[945px] h-[24px] w-[45px] bg-radial from-[#06351d]/70 to-transparent to-55%" />
      <ExplorerWindow />
      <PaintWindow />
      <ManagerWindow />
      <NameDialog />
      <Taskbar />
    </div>
  );
}
